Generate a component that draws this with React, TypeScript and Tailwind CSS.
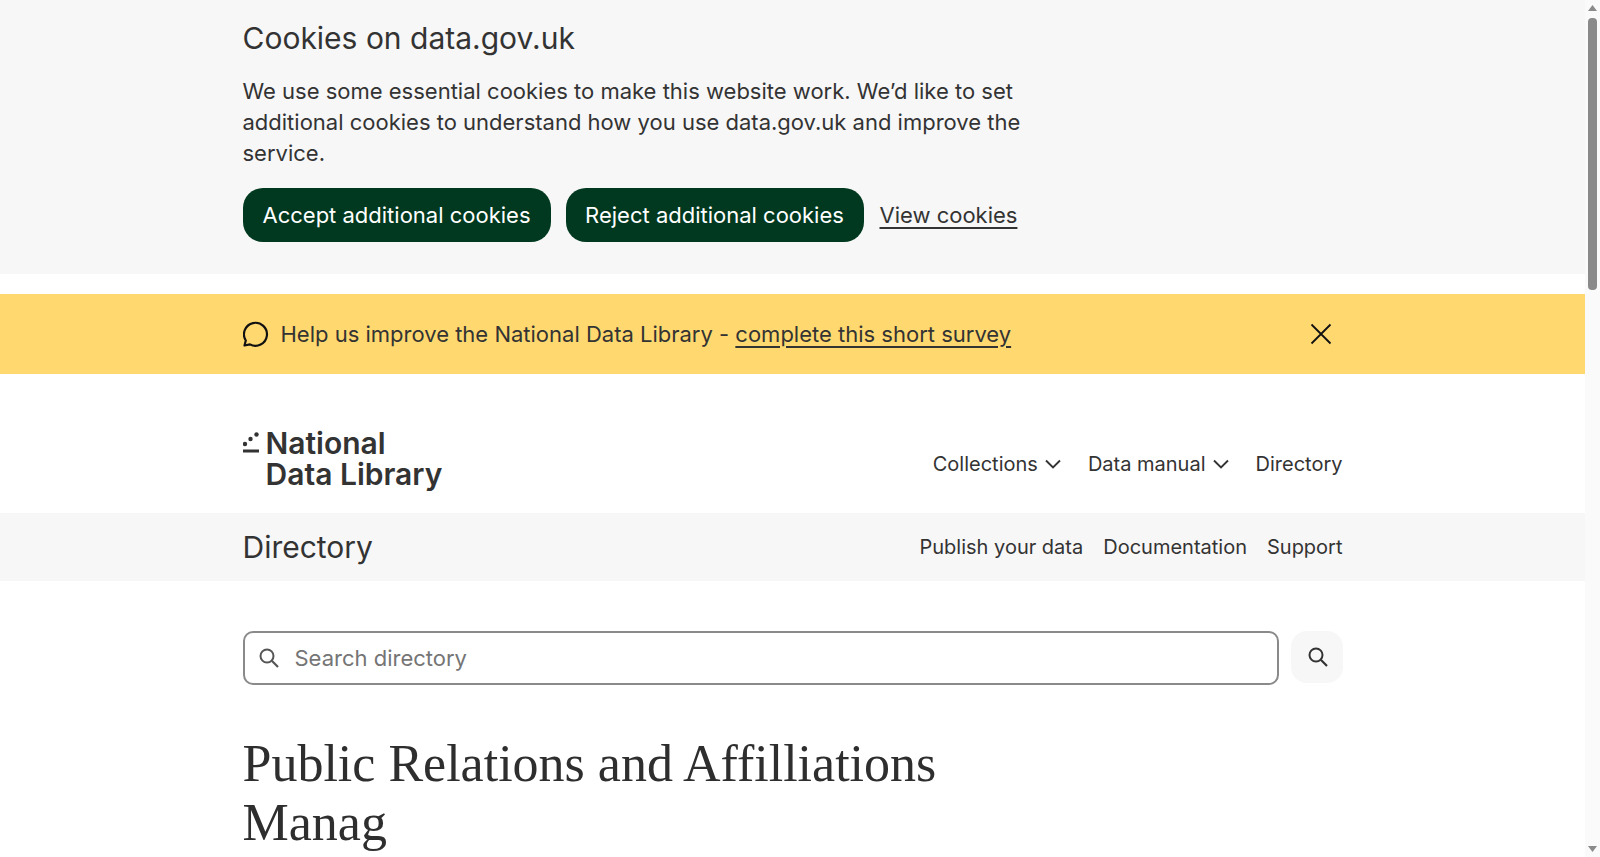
import React from 'react';

const Container: React.FC<{ children: React.ReactNode; className?: string }> = ({ children, className = '' }) => (
  <div className={`mx-auto w-[1100px] ${className}`}>{children}</div>
);

const Logo = () => (
  <svg width="16" height="22" viewBox="0 0 16 22" className="mt-[4px] shrink-0" fill="#333">
    <circle cx="13.5" cy="2.5" r="2.2" />
    <circle cx="7.5" cy="7" r="2.2" />
    <circle cx="2" cy="12" r="2.2" />
    <rect x="0" y="17.5" width="16" height="3" />
  </svg>
);

const SearchIcon = ({ className = '' }: { className?: string }) => (
  <svg width="20" height="20" viewBox="0 0 20 20" fill="none" stroke="currentColor" strokeWidth="2" className={className}>
    <circle cx="8" cy="8" r="6.5" />
    <path d="M12.8 12.8 L19 19" strokeWidth="2.2" />
  </svg>
);

const Chevron = () => (
  <svg width="16" height="10" viewBox="0 0 16 10" fill="none" stroke="currentColor" strokeWidth="1.9">
    <path d="M1 1.5 L8 8.5 L15 1.5" />
  </svg>
);

const Scrollbar = () => (
  <div className="flex h-full w-[15px] shrink-0 flex-col items-center bg-[#fafafa]">
    <svg width="9" height="6" viewBox="0 0 9 6" fill="#8a8a8a" className="mt-[5px]">
      <path d="M4.5 0 L9 6 L0 6 Z" />
    </svg>
    <div className="mt-[7px] h-[272px] w-[9px] rounded-t-[4px] rounded-b-[4px] bg-[#8a8a8a]" />
    <svg width="9" height="6" viewBox="0 0 9 6" fill="#8a8a8a" className="mt-auto mb-[5px]">
      <path d="M4.5 6 L9 0 L0 0 Z" />
    </svg>
  </div>
);

export default function App() {
  return (
    <div className="flex h-screen overflow-hidden bg-white font-['Inter',sans-serif] text-[#333]">
      <div className="min-w-0 flex-1">
        {/* Cookie banner */}
        <div className="h-[274px] bg-[#f7f7f7] pt-[19px]">
          <Container>
            <h2 className="text-[30px] leading-[38px]">Cookies on data.gov.uk</h2>
            <p className="mt-[19px] w-[790px] text-[22px] leading-[31px]">
              We use some essential cookies to make this website work. We’d like to set additional cookies to understand
              how you use data.gov.uk and improve the service.
            </p>
            <div className="mt-[19px] flex items-center gap-[15px] text-[22px]">
              <button className="h-[54px] w-[308px] rounded-[20px] bg-[#00391f] text-white">Accept additional cookies</button>
              <button className="h-[54px] w-[298px] rounded-[20px] bg-[#00391f] text-white">Reject additional cookies</button>
              <a className="ml-[1px] underline decoration-2 underline-offset-4">View cookies</a>
            </div>
          </Container>
        </div>

        {/* Survey banner */}
        <div className="mt-[20px] h-[80px] bg-[#ffd970]">
          <Container className="flex h-full items-center justify-between">
            <div className="flex items-center gap-[12px] text-[22px]">
              <svg width="26" height="26" viewBox="0 0 26 26" fill="none" stroke="#111" strokeWidth="2.2">
                <path d="M1.5 24.5 L2.8 19.5 A11.5 11.5 0 1 1 7 23.4 Z" strokeLinejoin="round" />
              </svg>
              <span>
                Help us improve the National Data Library -{' '}
                <a className="underline decoration-2 underline-offset-4">complete this short survey</a>
              </span>
            </div>
            <svg width="22" height="22" viewBox="0 0 22 22" fill="none" stroke="#111" strokeWidth="1.8" className="mr-[11px]">
              <path d="M1.5 1.5 L20.5 20.5 M20.5 1.5 L1.5 20.5" />
            </svg>
          </Container>
        </div>

        {/* Header */}
        <Container className="flex h-[139px] items-start justify-between pt-[54px]">
          <div className="flex gap-[7px]">
            <Logo />
            <div className="text-[30px] font-semibold leading-[31px]">
              <div>National</div>
              <div>Data Library</div>
            </div>
          </div>
          <nav className="mt-[21px] flex items-center gap-[27px] text-[20px]">
            <span className="flex items-center gap-[7px]">
              Collections <Chevron />
            </span>
            <span className="flex items-center gap-[7px]">
              Data manual <Chevron />
            </span>
            <span>Directory</span>
          </nav>
        </Container>

        {/* Sub nav */}
        <div className="h-[68px] bg-[#f7f7f7]">
          <Container className="flex h-full items-center justify-between">
            <span className="text-[30px]">Directory</span>
            <nav className="flex gap-[20px] text-[20px]">
              <span>Publish your data</span>
              <span>Documentation</span>
              <span>Support</span>
            </nav>
          </Container>
        </div>

        {/* Search */}
        <Container className="mt-[50px] flex items-start gap-[12px]">
          <div className="flex h-[54px] flex-1 items-center rounded-[10px] border-2 border-[#8a8a8a] pl-[14px]">
            <SearchIcon className="text-[#555]" />
            <span className="ml-[16px] pt-[1px] text-[22px] text-[#757575]">Search directory</span>
          </div>
          <button className="flex h-[52px] w-[52px] items-center justify-center rounded-[16px] bg-[#f7f7f7] pl-[2px]">
            <SearchIcon />
          </button>
        </Container>

        <Container>
          <h1 className="mt-[49px] w-[800px] font-['Liberation_Serif',serif] text-[52px] leading-[59px] text-[#2e2e2e]">
            Public Relations and Affilliations Manag
          </h1>
        </Container>
      </div>
      <Scrollbar />
    </div>
  );
}
